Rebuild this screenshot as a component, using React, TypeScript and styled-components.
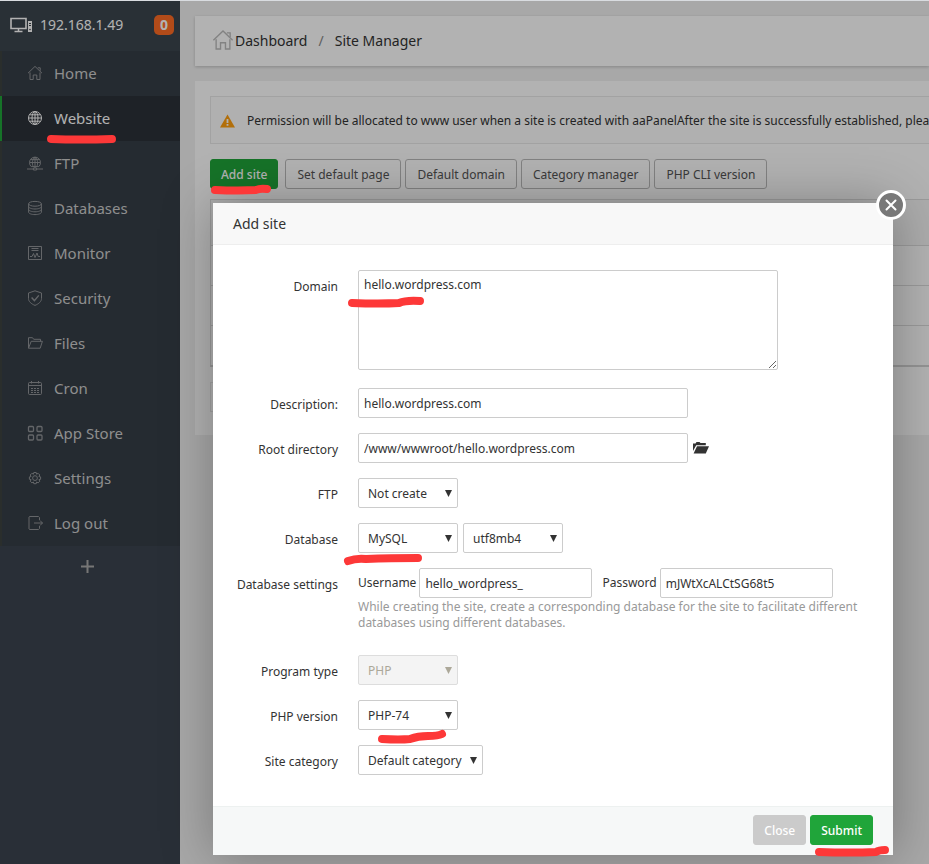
import React from "react";
import styled, { createGlobalStyle, css } from "styled-components";

const GlobalStyle = createGlobalStyle`
  *, *::before, *::after { box-sizing: border-box; }
  html, body, #root { height: 100%; }
  body {
    margin: 0;
    overflow: hidden;
    background: #f1f1f1;
    color: #333;
    font-family: "Noto Sans", "Open Sans", sans-serif;
    font-size: 12px;
    line-height: 16px;
  }
  button, input, select, textarea { font: inherit; color: inherit; margin: 0; }
`;

const Page = styled.div`
  position: relative;
  display: flex;
  min-height: 100%;
  border-top: 1px solid #d9dce0;
`;

/* ---------- sidebar ---------- */

const Sidebar = styled.aside`
  flex: 0 0 180px;
  background: #3c444f;
  color: #ccc;
`;

const Server = styled.div`
  display: flex;
  align-items: center;
  height: 50px;
  padding: 0 6px 2px 9px;
  gap: 7px;
  background: #3c454e;
  color: #fff;
  font-size: 14px;
`;

const Badge = styled.span`
  margin-left: auto;
  width: 20px;
  height: 20px;
  border-radius: 5px;
  background: #ff6c25;
  font-size: 14px;
  font-weight: 700;
  line-height: 20px;
  text-align: center;
`;

const Menu = styled.ul`
  margin: 0;
  padding: 0;
  list-style: none;
  background: #363e47;
`;

const MenuLink = styled.a<{ $active?: boolean }>`
  display: flex;
  align-items: center;
  gap: 11px;
  height: 45px;
  padding: 0 0 2px 25px;
  border-left: 2px solid ${(p) => (p.$active ? "#20a53a" : "#3d433f")};
  background: ${(p) => (p.$active ? "#2c3138" : "transparent")};
  color: ${(p) => (p.$active ? "#fff" : "#ccc")};
  font-size: 15px;
  text-decoration: none;
  svg { opacity: ${(p) => (p.$active ? 1 : 0.6)}; }
`;

const AddMenu = styled.button`
  display: block;
  width: 100%;
  height: 40px;
  padding: 0 6px 0 0;
  border: 0;
  background: none;
  svg { display: block; margin: 0 auto; }
`;

/* ---------- main area ---------- */

const Main = styled.main`
  flex: 1;
  min-width: 0;
  display: flex;
  flex-direction: column;
  gap: 15px;
  padding: 15px 0 0 15px;
`;

const Crumbs = styled.nav`
  display: flex;
  align-items: center;
  height: 50px;
  padding-left: 17px;
  background: #fff;
  box-shadow: 0 1px 3px rgba(0, 0, 0, 0.2);
  font-size: 14px;
  a { color: inherit; text-decoration: none; }
  svg { margin: 0 1px 3px 0; }
`;

const Slash = styled.span`
  margin: 0 11px;
  color: #888;
`;

const Card = styled.section`
  height: 354px;
  padding: 15px 0 0 15px;
  background: #fff;
`;

const Notice = styled.p`
  display: flex;
  align-items: center;
  gap: 12px;
  height: 48px;
  margin: 0 0 15px;
  padding: 2px 0 0 9px;
  border: 1px solid #e8e8e8;
  border-right: 0;
  background: #fcfcfc;
  overflow: hidden;
  white-space: nowrap;
  svg { flex: none; }
`;

const Toolbar = styled.div`
  display: flex;
  gap: 4px;
  margin-bottom: 10px;
`;

const Button = styled.button<{ $kind?: "primary" | "muted" }>`
  height: 30px;
  padding: 2px 11px 0;
  border: 1px solid #bbb;
  border-radius: 3px;
  background: transparent;
  color: #555;
  white-space: nowrap;
  ${(p) =>
    p.$kind &&
    css`
      padding: 2px 10px 0;
      border-color: ${p.$kind === "primary" ? "#20a53a" : "#cbcbcb"};
      background: ${p.$kind === "primary" ? "#20a53a" : "#cbcbcb"};
      color: #fff;
      font-weight: 500;
    `}
`;

const AddButton = styled(Button)`
  margin-right: 3px;
`;

const SiteTable = styled.table`
  width: 100%;
  border: 1px solid #ddd;
  border-right: 0;
  border-bottom: 2px solid #d4d4d4;
  border-collapse: collapse;
  th { height: 46px; background: #f6f6f6; border-bottom: 1px solid #ddd; }
  td { height: 40px; border-bottom: 1px solid #ddd; }
`;

const Pager = styled.div`
  height: 30px;
  margin-top: 15px;
  border: 1px solid #e8e8e8;
  border-right: 0;
  width: 60%;
`;

/* ---------- dialog ---------- */

const Shade = styled.div`
  position: absolute;
  inset: 0;
  display: flex;
  align-items: flex-start;
  justify-content: flex-end;
  padding: 202px 36px 0 0;
  overflow: hidden;
  background: rgba(0, 0, 0, 0.3);
`;

const Dialog = styled.form`
  position: relative;
  width: 100%;
  max-width: 680px;
  background: #fff;
  box-shadow: 1px 1px 50px rgba(0, 0, 0, 0.3);
`;

const DialogTitle = styled.h2`
  margin: 0;
  height: 42px;
  padding-left: 20px;
  border-bottom: 1px solid #eee;
  background: #f8f8f8;
  font-size: 14px;
  font-weight: 400;
  line-height: 42px;
`;

const CloseIcon = styled.button`
  position: absolute;
  top: -13px;
  right: -13px;
  width: 30px;
  height: 30px;
  padding: 0;
  border: 3px solid #fff;
  border-radius: 50%;
  background: #787878;
  svg { display: block; margin: auto; }
`;

const Fields = styled.div`
  display: flex;
  flex-direction: column;
  gap: 11px;
  padding: 25px 0 27px 22px;
`;

const Row = styled.div<{ $after?: number }>`
  display: grid;
  grid-template-columns: 103px 1fr;
  column-gap: 20px;
  margin-bottom: ${(p) => p.$after ?? 0}px;
`;

const Label = styled.label`
  line-height: 34px;
  text-align: right;
  white-space: nowrap;
`;

const Legend = styled(Label).attrs({ as: "span" })``;

const Field = styled.div`
  min-height: 34px;
`;

const Inline = styled.div`
  display: flex;
  align-items: center;
  gap: 5px;
  height: 30px;
`;

const Pair = styled.label`
  display: flex;
  align-items: center;
  gap: 3px;
  margin-right: 5px;
`;

const control = css`
  border: 1px solid #ccc;
  border-radius: 2px;
  background: #fff;
  outline: 0;
`;

const Input = styled.input<{ $short?: boolean }>`
  ${control}
  width: ${(p) => (p.$short ? 173 : 330)}px;
  height: 30px;
  padding: 0 5px;
`;

const TextArea = styled.textarea`
  ${control}
  display: block;
  width: 420px;
  height: 100px;
  padding: 6px 5px;
  resize: both;
`;

const SelectBox = styled.div<{ $wide?: boolean }>`
  display: grid;
  align-items: center;
  width: ${(p) => (p.$wide ? 125 : 100)}px;
  color: #333;
  &:has(:disabled) { color: #aca899; }
  > * { grid-area: 1 / 1; }
  svg { justify-self: end; margin-right: 6px; pointer-events: none; }
`;

const SelectControl = styled.select`
  ${control}
  width: 100%;
  height: 30px;
  padding: 2px 9px 0;
  appearance: none;
  &:disabled { background: #f4f4f4; border-color: #ddd; opacity: 1; }
`;

const IconButton = styled.button`
  display: flex;
  padding: 0;
  border: 0;
  background: none;
`;

const Help = styled.p`
  margin: 0;
  padding-top: 1px;
  max-width: 520px;
  color: #999;
`;

const DialogFooter = styled.footer`
  display: flex;
  justify-content: flex-end;
  gap: 4px;
  height: 49px;
  padding: 8px 20px 0 0;
  border-top: 1px solid #edf1f0;
  background: #f6f8f8;
`;

const Markup = styled.svg`
  position: absolute;
  top: 0;
  left: 0;
  pointer-events: none;
`;

/* ---------- icons ---------- */

const Line = ({ size = 16, children }: { size?: number; children: React.ReactNode }) => (
  <svg width={size} height={size} viewBox="0 0 16 16" fill="none" stroke="currentColor" strokeWidth="1" aria-hidden="true">
    {children}
  </svg>
);

const houseLines = (
  <>
    <path d="M1 8.2 8 1.4l7 6.8" />
    <path d="M3 7.5v7h3.2V10h3.6v4.5H13v-7" />
    <path d="M10.8 2.8h2.4v3" />
  </>
);

const icons: Record<string, React.ReactNode> = {
  Home: houseLines,
  Website: (
    <>
      <circle cx="8" cy="8" r="6.5" />
      <ellipse cx="8" cy="8" rx="3" ry="6.5" />
      <path d="M8 1.5v13M1.5 8h13M2.6 4.8h10.8M2.6 11.2h10.8" />
    </>
  ),
  FTP: (
    <>
      <path d="M4.2 11.6a5.5 5.5 0 1 1 7.6 0z" />
      <path d="M6.2 11.6c-1.4-3-1-7.4 1.8-9.4 2.8 2 3.2 6.4 1.8 9.4M8 2v9.6M2.8 7.5h10.4M3.8 4.6h8.4M8 11.6v1.6" />
      <path d="M0 14h6M10 14h6M6.4 13h3.2v2H6.4z" />
    </>
  ),
  Databases: (
    <>
      <ellipse cx="8" cy="3.8" rx="6.4" ry="2.4" />
      <path d="M1.6 3.8v8.4c0 1.3 2.9 2.4 6.4 2.4s6.4-1.1 6.4-2.4V3.8M1.6 6.6C1.6 7.9 4.5 9 8 9s6.4-1.1 6.4-2.4M1.6 9.4c0 1.3 2.9 2.4 6.4 2.4s6.4-1.1 6.4-2.4" />
    </>
  ),
  Monitor: (
    <>
      <path d="M1.5 1.5h13v13h-13zM4.500 3.500h7M4.500 5.500h7" />
      <path d="M3 11.500h2l1.500-3 1.500 4 2-4.500 1.200 3.500H13" />
    </>
  ),
  Security: (
    <>
      <path d="M8 .8 14.500 3v5.500c0 3-2.600 5.300-6.500 6.900-3.900-1.600-6.500-3.900-6.500-6.900V3z" />
      <path d="m4.600 7.600 2.800 3 4.400-5.200" strokeWidth="1.400" />
    </>
  ),
  Files: (
    <path d="M1.500 13.200V2.700h4l1.200 1.600h6.800v2M1.500 13.200 4.200 6.300h11.200l-2.200 6.900z" />
  ),
  Cron: (
    <>
      <path d="M2.500 2.500h11c.6 0 1 .4 1 1v10c0 .6-.4 1-1 1h-11c-.6 0-1-.4-1-1v-10c0-.6.4-1 1-1zM1.500 5.500h13M4.500 1v2.500M11.500 1v2.500" />
      <path d="M4 8.500h8M4 10.500h8M4 12.500h8" strokeDasharray="2 1" />
    </>
  ),
  "App Store": (
    <g strokeWidth="1.300">
      <rect x="1.500" y="1.500" width="5" height="5" rx="1" />
      <rect x="10" y="1.500" width="5" height="5" rx="1" />
      <rect x="1.500" y="10" width="5" height="5" rx="1" />
      <rect x="10" y="10" width="5" height="5" rx="1" />
    </g>
  ),
  Settings: (
    <>
      <path d="M6.800 1.500h2.400l.4 1.700 1.500-.9 1.700 1.700-.9 1.500 1.700.4v2.400l-1.700.4.9 1.500-1.700 1.700-1.500-.9-.4 1.700H6.800l-.4-1.700-1.500.9-1.700-1.700.9-1.500-1.700-.4V5.900l1.700-.4-.9-1.500 1.700-1.700 1.500.9z" transform="translate(0 1)" />
      <circle cx="8" cy="8.100" r="2.400" />
    </>
  ),
  "Log out": (
    <>
      <path d="M12.500 5V2.500l-1-1h-9l-.5.5v12l.5.5h9l1-1V11" />
      <path d="M7 8h8.500M13 5.500 15.500 8 13 10.500" />
    </>
  ),
};

const ServerIcon = () => (
  <svg width="24" height="18" viewBox="0 0 24 18" fill="none" stroke="currentColor" aria-hidden="true">
    <path d="M2 2.500h15v10H2z" strokeWidth="1.600" />
    <path d="M9.500 13v2M5.500 15.500h8" strokeWidth="1.500" />
    <path d="M19 5h4v11h-4z" fill="currentColor" stroke="none" />
    <path d="M20 7.500h2M20 9.500h2" stroke="#3c454e" />
    <circle cx="21" cy="13.500" r=".8" fill="#3c454e" stroke="none" />
  </svg>
);

const WarningIcon = () => (
  <svg width="15" height="14" viewBox="0 0 15 14" aria-hidden="true">
    <path d="M7.500.5 15 13.500H0z" fill="#ff9f0f" />
    <path d="M6.600 5h1.800v4H6.600zM6.600 10h1.800v1.800H6.600z" fill="#fff" />
  </svg>
);

const FolderIcon = () => (
  <svg width="16" height="12" viewBox="0 0 16 12" fill="#333" aria-hidden="true">
    <path d="M0 9V1.500h2.500L3.500 0h3l1 1h5.300v2.200H3.200z" />
    <path d="M4 4.200h12L12.800 11.600H.6z" />
  </svg>
);

const Arrow = () => (
  <svg width="7" height="7" viewBox="0 0 7 7" fill="currentColor" aria-hidden="true">
    <path d="M0 0h7L3.500 7z" />
  </svg>
);

const menu = [
  "Home", "Website", "FTP", "Databases", "Monitor", "Security",
  "Files", "Cron", "App Store", "Settings", "Log out",
];

const strokes = [
  "M51 138Q80 139 112 138",
  "M215 189Q240 190 256 189Q260 187 267 188",
  "M352 302Q380 303 399 302Q406 299 420 300",
  "M348 560Q356 557 366 558Q390 557 418 557",
  "M382 738Q400 739 410 738Q418 735 428 735Q438 735 442 733",
  "M819 851Q850 852 876 851Q879 849 885 849",
];

function Select({ id, options, disabled, wide, label }: {
  id: string; options: string[]; disabled?: boolean; wide?: boolean; label?: string;
}) {
  return (
    <SelectBox $wide={wide}>
      <SelectControl id={id} disabled={disabled} aria-label={label}>
        {options.map((o) => <option key={o}>{o}</option>)}
      </SelectControl>
      <Arrow />
    </SelectBox>
  );
}

export default function App() {
  return (
    <>
      <GlobalStyle />
      <Page>
        <Sidebar>
          <Server>
            <ServerIcon />
            192.168.1.49
            <Badge>0</Badge>
          </Server>
          <Menu>
            {menu.map((name) => (
              <li key={name}>
                <MenuLink href="#" $active={name === "Website"}>
                  <Line>{icons[name]}</Line>
                  {name}
                </MenuLink>
              </li>
            ))}
          </Menu>
          <AddMenu type="button" aria-label="Add menu entry">
            <svg width="13" height="13" viewBox="0 0 13 13" stroke="#aaa" strokeWidth="2" aria-hidden="true">
              <path d="M6.500 0v13M0 6.500h13" />
            </svg>
          </AddMenu>
        </Sidebar>

        <Main>
          <Crumbs>
            <svg width="22" height="22" viewBox="0 0 16 16" fill="none" stroke="#bbb" strokeWidth="1" aria-hidden="true">
              {houseLines}
            </svg>
            <a href="#">Dashboard</a>
            <Slash>/</Slash>
            <a href="#">Site Manager</a>
          </Crumbs>
          <Card>
            <Notice>
              <WarningIcon />
              Permission will be allocated to www user when a site is created with aaPanelAfter the site is successfully established, please
            </Notice>
            <Toolbar>
              <AddButton type="button" $kind="primary">Add site</AddButton>
              <Button type="button">Set default page</Button>
              <Button type="button">Default domain</Button>
              <Button type="button">Category manager</Button>
              <Button type="button">PHP CLI version</Button>
            </Toolbar>
            <SiteTable>
              <thead><tr><th /></tr></thead>
              <tbody>
                <tr><td /></tr>
                <tr><td /></tr>
                <tr><td /></tr>
              </tbody>
            </SiteTable>
            <Pager />
          </Card>
        </Main>

        <Shade>
          <Dialog role="dialog" aria-labelledby="dialog-title" onSubmit={(e) => e.preventDefault()}>
            <DialogTitle id="dialog-title">Add site</DialogTitle>
            <Fields>
              <Row $after={7}>
                <Label htmlFor="domain">Domain</Label>
                <TextArea id="domain" defaultValue="hello.wordpress.com" />
              </Row>
              <Row>
                <Label htmlFor="description">Description:</Label>
                <Field><Input id="description" defaultValue="hello.wordpress.com" /></Field>
              </Row>
              <Row>
                <Label htmlFor="root-dir">Root directory</Label>
                <Inline>
                  <Input id="root-dir" defaultValue="/www/wwwroot/hello.wordpress.com" />
                  <IconButton type="button" aria-label="Browse"><FolderIcon /></IconButton>
                </Inline>
              </Row>
              <Row>
                <Label htmlFor="ftp">FTP</Label>
                <Field><Select id="ftp" options={["Not create", "Create"]} /></Field>
              </Row>
              <Row>
                <Label htmlFor="database">Database</Label>
                <Inline>
                  <Select id="database" options={["MySQL", "Not create"]} />
                  <Select id="charset" label="Character set" options={["utf8mb4", "utf8"]} />
                </Inline>
              </Row>
              <Row $after={13}>
                <Legend>Database settings</Legend>
                <Field>
                  <Inline>
                    <Pair>Username<Input $short defaultValue="hello_wordpress_" /></Pair>
                    <Pair>Password<Input $short defaultValue="mJWtXcALCtSG68t5" /></Pair>
                  </Inline>
                  <Help>
                    While creating the site, create a corresponding database for the site to facilitate different databases using different databases.
                  </Help>
                </Field>
              </Row>
              <Row>
                <Label htmlFor="program">Program type</Label>
                <Field><Select id="program" options={["PHP"]} disabled /></Field>
              </Row>
              <Row>
                <Label htmlFor="php">PHP version</Label>
                <Field><Select id="php" options={["PHP-74"]} /></Field>
              </Row>
              <Row>
                <Label htmlFor="category">Site category</Label>
                <Field><Select id="category" options={["Default category"]} wide /></Field>
              </Row>
            </Fields>
            <DialogFooter>
              <Button type="button" $kind="muted">Close</Button>
              <Button type="submit" $kind="primary">Submit</Button>
            </DialogFooter>
            <CloseIcon type="button" aria-label="Close dialog">
              <svg width="12" height="12" viewBox="0 0 12 12" stroke="#fff" strokeWidth="2" strokeLinecap="round" aria-hidden="true">
                <path d="m1.500 1.500 9 9M10.500 1.500l-9 9" />
              </svg>
            </CloseIcon>
          </Dialog>
        </Shade>

        <Markup width="929" height="863" fill="none" stroke="#fd3838" strokeWidth="8" strokeLinecap="round" strokeLinejoin="round" aria-hidden="true">
          {strokes.map((d) => <path key={d} d={d} />)}
        </Markup>
      </Page>
    </>
  );
}
